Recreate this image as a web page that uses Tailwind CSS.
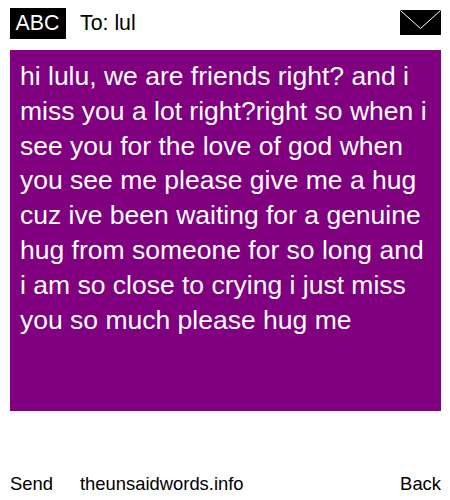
<!DOCTYPE html>
<html lang="en">
<head>
  <meta charset="UTF-8">
  <title>To: lul</title>
  <script src="https://cdn.jsdelivr.net/npm/@tailwindcss/browser@4"></script>
</head>
<body class="w-[450px] h-[500px] bg-white text-black overflow-hidden font-['Liberation_Sans',Arial,sans-serif]">
  <div class="flex flex-col h-full pl-[10px] pr-[9px]">
    <!-- top bar -->
    <div class="h-[50px] pt-2 flex items-start">
      <div class="w-14 h-[31px] pr-px bg-black text-white text-[21.33px] leading-[31px] text-center">ABC</div>
      <div class="ml-[14px] text-[21.33px] leading-[31px]">To: lul</div>
      <svg class="ml-auto mt-[2px]" width="41" height="25" viewBox="0 0 41 25" shape-rendering="crispEdges">
        <rect width="41" height="25" fill="#000"/>
        <path d="M0.5 0.5 L20.5 18.5 L40.5 0.5" fill="none" stroke="#fff" stroke-width="1" shape-rendering="auto"/>
      </svg>
    </div>

    <!-- message -->
    <div class="h-[361px] bg-[#800080] text-white text-[26.5px] leading-[34.8px] px-[10px] pt-[9px]">hi lulu, we are friends right? and i miss you a lot right?right so when i see you for the love of god when you see me please give me a hug cuz ive been waiting for a genuine hug from someone for so long and i am so close to crying i just miss you so much please hug me</div>

    <!-- bottom bar -->
    <div class="mt-auto h-[31px] flex text-[18.4px] leading-[30px]">
      <div class="w-[70px]">Send</div>
      <div>theunsaidwords.info</div>
      <div class="ml-auto">Back</div>
    </div>
  </div>
</body>
</html>
